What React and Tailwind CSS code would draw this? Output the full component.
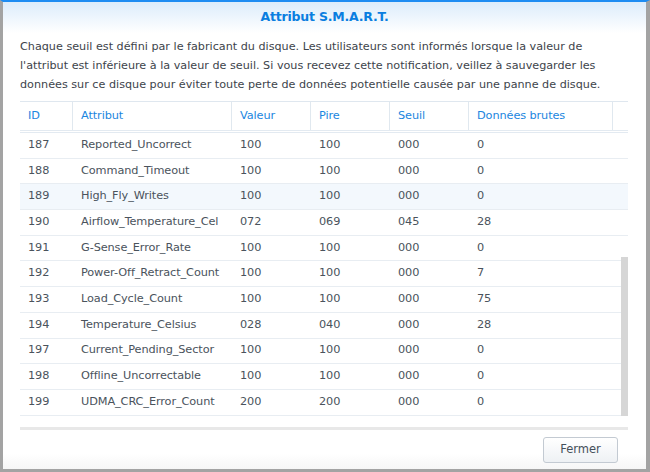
import React from "react";

const rows = [
  ["187", "Reported_Uncorrect", "100", "100", "000", "0"],
  ["188", "Command_Timeout", "100", "100", "000", "0"],
  ["189", "High_Fly_Writes", "100", "100", "000", "0"],
  ["190", "Airflow_Temperature_Cel", "072", "069", "045", "28"],
  ["191", "G-Sense_Error_Rate", "100", "100", "000", "0"],
  ["192", "Power-Off_Retract_Count", "100", "100", "000", "7"],
  ["193", "Load_Cycle_Count", "100", "100", "000", "75"],
  ["194", "Temperature_Celsius", "028", "040", "000", "28"],
  ["197", "Current_Pending_Sector", "100", "100", "000", "0"],
  ["198", "Offline_Uncorrectable", "100", "100", "000", "0"],
  ["199", "UDMA_CRC_Error_Count", "200", "200", "000", "0"],
];

const cols = ["w-[53px]", "w-[159px]", "w-[79px]", "w-[79px]", "w-[79px]", "w-[144px]", "w-[15px]"];
const heads = ["ID", "Attribut", "Valeur", "Pire", "Seuil", "Données brutes", ""];

export default function App() {
  return (
    <div
      className="w-[650px] h-[472px] flex flex-col bg-white border-l-[3px] border-r-[4px] border-b-[3px] border-[#a3a3a3] border-t-[2px] border-t-[#1e8cf2] overflow-hidden"
      style={{ fontFamily: '"DejaVu Sans", Verdana, sans-serif' }}
    >
      <div className="h-[31px] shrink-0 flex items-center justify-center bg-gradient-to-b from-[#dcecfb] to-white">
        <span className="text-[12.5px] font-bold text-[#0a7ee0] tracking-[-0.2px]">Attribut S.M.A.R.T.</span>
      </div>
      <div className="px-[17px] pt-[4px] h-[68px] shrink-0 text-[11.2px] leading-[19px] text-[#3d444b]">
        Chaque seuil est défini par le fabricant du disque. Les utilisateurs sont informés lorsque la valeur de l'attribut est inférieure à la valeur de seuil. Si vous recevez cette notification, veillez à sauvegarder les données sur ce disque pour éviter toute perte de données potentielle causée par une panne de disque.
      </div>
      <div className="relative ml-[17px] w-[608px] h-[326px] shrink-0 border-t border-[#dfe7ef] text-[11.3px] text-[#4a535c] tracking-[-0.1px]">
        <div className="flex h-[31px] border-b-[3px] border-double border-b-[#e3eaf1]">
          {heads.map((h, i) => (
            <div
              key={i}
              className={`${cols[i]} shrink-0 h-full flex items-center pl-[8px] text-[#1b86e0] ${i < 6 ? "border-r border-[#e0e8ef]" : ""}`}
            >
              {h}
            </div>
          ))}
        </div>
        <div className="flex flex-col">
          {rows.map((r, ri) => (
            <div
              key={ri}
              className={`flex h-[25.7px] border-b border-[#e8edf2] ${ri === 2 ? "bg-[#f3f8fd]" : ""}`}
            >
              {r.map((c, ci) => (
                <div key={ci} className={`${cols[ci]} shrink-0 flex items-center pl-[8px]`}>
                  {c}
                </div>
              ))}
              <div className="w-[15px] shrink-0" />
            </div>
          ))}
        </div>
        <div className="absolute right-0 top-[155px] w-[7px] h-[159px] bg-[#d6d6d6]" />
      </div>
      <div className="ml-[17px] w-[608px] h-[3px] shrink-0 bg-[#e8e8e8]" />
      <div className="flex-1 flex justify-end items-start pt-[7px] pr-[28px] bg-gradient-to-b from-white from-60% to-[#f6f6f6]">
        <button className="w-[75px] h-[26px] rounded-[3px] border border-[#c3cad2] bg-gradient-to-b from-white to-[#eef1f4] text-[11.5px] text-[#45505a]">
          Fermer
        </button>
      </div>
    </div>
  );
}
